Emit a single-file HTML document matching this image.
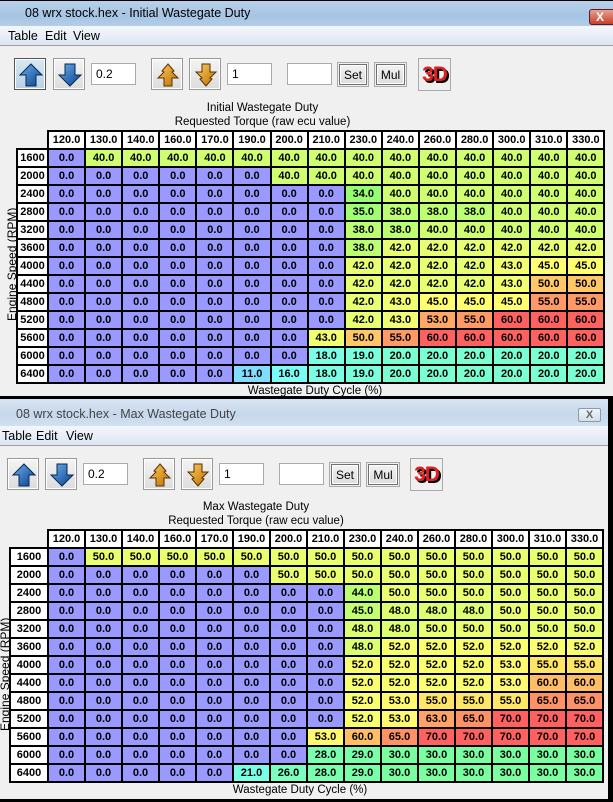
<!DOCTYPE html>
<html><head><meta charset="utf-8"><style>
*{box-sizing:border-box;margin:0;padding:0}
body{width:613px;height:802px;overflow:hidden;background:#000;font-family:"Liberation Sans",sans-serif;font-size:12px;color:#000;position:relative}
.win{position:absolute;left:0;background:#f0f0f0;overflow:hidden}
.tb{position:absolute;left:0;right:0;top:0;height:25px;background:linear-gradient(#b9d1ea,#a6c4e4 60%,#b4cde8)}
.tb span{position:absolute;top:5px;font-size:12.5px;color:#000}
.menu{position:absolute;left:0;right:0;height:20px;background:linear-gradient(#f4f7fc,#dde6f4);border-bottom:1px solid #a0a0a0}
.menu span{position:absolute;top:3px;font-size:12.5px}
.btn{position:absolute;width:32px;height:32px;border:1px solid #999;background:linear-gradient(#f4f4f4,#dcdcdc);box-shadow:inset 0 0 0 1px #fff}
.btn svg{position:absolute;left:3px;top:3px}
.inp{position:absolute;height:22px;background:#fff;border:1px solid #aaa;padding:3px 4px;font-size:12px}
.pb{position:absolute;height:21px;border:1px solid #707070;background:linear-gradient(#f2f2f2,#dcdcdc);box-shadow:inset 0 0 0 1px #fff;text-align:center;padding-top:3px;font-size:12px;outline:1px solid #aaa;outline-offset:1px}
.d3{position:absolute;width:33px;height:33px;border:1px solid #aaa;background:#f0f0f0;font-weight:bold;font-size:21px;color:#e02020;text-align:center;line-height:31px;letter-spacing:-1px;text-shadow:2px 2px 0 #000}
.cap{position:absolute;left:0;width:525px;text-align:center;font-size:11.5px}
table{position:absolute;border-collapse:collapse;table-layout:fixed}
td{border:2px solid #000;height:18px;text-align:center;font-weight:bold;font-size:11px;padding:0;line-height:14px}
td.h{background:#fff}
td.e{border:none;background:transparent}
.vl{position:absolute;transform:rotate(-90deg);transform-origin:0 0;font-size:12px;white-space:nowrap}
.a{background:#9999ff}
.t11{background:hsl(196,100%,75%)}.t16{background:hsl(176,100%,74%)}.t18{background:hsl(168,100%,74%)}.t19{background:hsl(164,100%,74%)}.t20{background:hsl(160,100%,74%)}
.t34{background:hsl(104,100%,72%)}.t35{background:hsl(100,100%,72%)}.t38{background:hsl(88,100%,72%)}.t40{background:hsl(80,100%,72%)}.t42{background:hsl(70,100%,72%)}.t43{background:hsl(66,100%,72%)}.t45{background:hsl(60,100%,72%)}.t50{background:hsl(38,100%,70%)}.t53{background:hsl(26,100%,70%)}.t55{background:hsl(20,100%,70%)}.t60{background:hsl(0,100%,69%)}
.b21{background:hsl(168,100%,74%)}.b26{background:hsl(151,100%,74%)}.b28{background:hsl(144,100%,74%)}.b29{background:hsl(141,100%,74%)}.b30{background:hsl(137,100%,74%)}
.b44{background:hsl(89,100%,72%)}.b45{background:hsl(86,100%,72%)}.b48{background:hsl(75,100%,72%)}.b50{background:hsl(69,100%,72%)}.b52{background:hsl(62,100%,72%)}.b53{background:hsl(58,100%,72%)}.b55{background:hsl(50,100%,70%)}.b60{background:hsl(34,100%,70%)}.b63{background:hsl(24,100%,70%)}.b65{background:hsl(17,100%,70%)}.b70{background:hsl(0,100%,69%)}
</style></head><body>
<svg width="0" height="0" style="position:absolute"><defs>
<linearGradient id="bl" x1="0" y1="0" x2="1" y2="1"><stop offset="0" stop-color="#6ab0f0"/><stop offset="1" stop-color="#0a3f8a"/></linearGradient>
<linearGradient id="or" x1="0" y1="0" x2="1" y2="1"><stop offset="0" stop-color="#ffd060"/><stop offset="1" stop-color="#b86a00"/></linearGradient>
</defs></svg>

<!-- Window 1 -->
<div class="win" style="top:0;width:613px;height:396px;border-top:1px solid #000">
<div class="tb"><span style="left:25px">08 wrx stock.hex - Initial Wastegate Duty</span>
<div style="position:absolute;left:589px;top:8px;width:26px;height:16px;border:1px solid #5a1d1d;border-radius:3px;background:linear-gradient(#e8a090,#c8402c);color:#fff;font-weight:bold;font-size:12px;line-height:14px;text-indent:6px">X</div></div>
<div class="menu" style="top:25px"><span style="left:8px">Table</span><span style="left:45px">Edit</span><span style="left:73px">View</span></div>
<div class="btn" style="left:14px;top:57px;border-color:#555;background:linear-gradient(#d8e8f4,#b8d0e4)"><svg width="26" height="26"><path d="M13 2 L24 13 L18 13 L18 24 L8 24 L8 13 L2 13 Z" fill="url(#bl)" stroke="#062850" stroke-width="1"/></svg></div>
<div class="btn" style="left:53px;top:57px"><svg width="26" height="26"><path d="M13 24 L24 13 L18 13 L18 2 L8 2 L8 13 L2 13 Z" fill="url(#bl)" stroke="#062850" stroke-width="1"/></svg></div>
<div class="inp" style="left:91px;top:62px;width:45px">0.2</div>
<div class="btn" style="left:151px;top:57px"><svg width="26" height="26"><path d="M13 2 L19 9 L17 10 L23 16 L17 16 L17 24 L9 24 L9 16 L3 16 L9 10 L7 9 Z" fill="url(#or)" stroke="#5a3000" stroke-width="1"/></svg></div>
<div class="btn" style="left:189px;top:57px"><svg width="26" height="26"><path d="M13 24 L19 17 L17 16 L23 10 L17 10 L17 2 L9 2 L9 10 L3 10 L9 16 L7 17 Z" fill="url(#or)" stroke="#5a3000" stroke-width="1"/></svg></div>
<div class="inp" style="left:227px;top:62px;width:45px">1</div>
<div class="inp" style="left:287px;top:62px;width:45px"></div>
<div class="pb" style="left:339px;top:63px;width:28px">Set</div>
<div class="pb" style="left:376px;top:63px;width:29px">Mul</div>
<div class="d3" style="left:418px;top:57px">3D</div>
<div class="cap" style="top:101px;left:0;width:525px">Initial Wastegate Duty</div>
<div class="cap" style="top:115px;left:0;width:525px">Requested Torque (raw ecu value)</div>
<div class="vl" style="left:5px;top:320px">Engine Speed (RPM)</div>
<table style="left:16px;top:129px;width:588px">
<colgroup><col style="width:31px"><col span="15" style="width:37.1px"></colgroup>
<tr><td class="e"></td><td class="h">120.0</td><td class="h">130.0</td><td class="h">140.0</td><td class="h">160.0</td><td class="h">170.0</td><td class="h">190.0</td><td class="h">200.0</td><td class="h">210.0</td><td class="h">230.0</td><td class="h">240.0</td><td class="h">260.0</td><td class="h">280.0</td><td class="h">300.0</td><td class="h">310.0</td><td class="h">330.0</td></tr>
<tr><td class="h">1600</td><td class="a">0.0</td><td class="t40">40.0</td><td class="t40">40.0</td><td class="t40">40.0</td><td class="t40">40.0</td><td class="t40">40.0</td><td class="t40">40.0</td><td class="t40">40.0</td><td class="t40">40.0</td><td class="t40">40.0</td><td class="t40">40.0</td><td class="t40">40.0</td><td class="t40">40.0</td><td class="t40">40.0</td><td class="t40">40.0</td></tr>
<tr><td class="h">2000</td><td class="a">0.0</td><td class="a">0.0</td><td class="a">0.0</td><td class="a">0.0</td><td class="a">0.0</td><td class="a">0.0</td><td class="t40">40.0</td><td class="t40">40.0</td><td class="t40">40.0</td><td class="t40">40.0</td><td class="t40">40.0</td><td class="t40">40.0</td><td class="t40">40.0</td><td class="t40">40.0</td><td class="t40">40.0</td></tr>
<tr><td class="h">2400</td><td class="a">0.0</td><td class="a">0.0</td><td class="a">0.0</td><td class="a">0.0</td><td class="a">0.0</td><td class="a">0.0</td><td class="a">0.0</td><td class="a">0.0</td><td class="t34">34.0</td><td class="t40">40.0</td><td class="t40">40.0</td><td class="t40">40.0</td><td class="t40">40.0</td><td class="t40">40.0</td><td class="t40">40.0</td></tr>
<tr><td class="h">2800</td><td class="a">0.0</td><td class="a">0.0</td><td class="a">0.0</td><td class="a">0.0</td><td class="a">0.0</td><td class="a">0.0</td><td class="a">0.0</td><td class="a">0.0</td><td class="t35">35.0</td><td class="t38">38.0</td><td class="t38">38.0</td><td class="t38">38.0</td><td class="t40">40.0</td><td class="t40">40.0</td><td class="t40">40.0</td></tr>
<tr><td class="h">3200</td><td class="a">0.0</td><td class="a">0.0</td><td class="a">0.0</td><td class="a">0.0</td><td class="a">0.0</td><td class="a">0.0</td><td class="a">0.0</td><td class="a">0.0</td><td class="t38">38.0</td><td class="t38">38.0</td><td class="t40">40.0</td><td class="t40">40.0</td><td class="t40">40.0</td><td class="t40">40.0</td><td class="t40">40.0</td></tr>
<tr><td class="h">3600</td><td class="a">0.0</td><td class="a">0.0</td><td class="a">0.0</td><td class="a">0.0</td><td class="a">0.0</td><td class="a">0.0</td><td class="a">0.0</td><td class="a">0.0</td><td class="t38">38.0</td><td class="t42">42.0</td><td class="t42">42.0</td><td class="t42">42.0</td><td class="t42">42.0</td><td class="t42">42.0</td><td class="t42">42.0</td></tr>
<tr><td class="h">4000</td><td class="a">0.0</td><td class="a">0.0</td><td class="a">0.0</td><td class="a">0.0</td><td class="a">0.0</td><td class="a">0.0</td><td class="a">0.0</td><td class="a">0.0</td><td class="t42">42.0</td><td class="t42">42.0</td><td class="t42">42.0</td><td class="t42">42.0</td><td class="t43">43.0</td><td class="t45">45.0</td><td class="t45">45.0</td></tr>
<tr><td class="h">4400</td><td class="a">0.0</td><td class="a">0.0</td><td class="a">0.0</td><td class="a">0.0</td><td class="a">0.0</td><td class="a">0.0</td><td class="a">0.0</td><td class="a">0.0</td><td class="t42">42.0</td><td class="t42">42.0</td><td class="t42">42.0</td><td class="t42">42.0</td><td class="t43">43.0</td><td class="t50">50.0</td><td class="t50">50.0</td></tr>
<tr><td class="h">4800</td><td class="a">0.0</td><td class="a">0.0</td><td class="a">0.0</td><td class="a">0.0</td><td class="a">0.0</td><td class="a">0.0</td><td class="a">0.0</td><td class="a">0.0</td><td class="t42">42.0</td><td class="t43">43.0</td><td class="t45">45.0</td><td class="t45">45.0</td><td class="t45">45.0</td><td class="t55">55.0</td><td class="t55">55.0</td></tr>
<tr><td class="h">5200</td><td class="a">0.0</td><td class="a">0.0</td><td class="a">0.0</td><td class="a">0.0</td><td class="a">0.0</td><td class="a">0.0</td><td class="a">0.0</td><td class="a">0.0</td><td class="t42">42.0</td><td class="t43">43.0</td><td class="t53">53.0</td><td class="t55">55.0</td><td class="t60">60.0</td><td class="t60">60.0</td><td class="t60">60.0</td></tr>
<tr><td class="h">5600</td><td class="a">0.0</td><td class="a">0.0</td><td class="a">0.0</td><td class="a">0.0</td><td class="a">0.0</td><td class="a">0.0</td><td class="a">0.0</td><td class="t43">43.0</td><td class="t50">50.0</td><td class="t55">55.0</td><td class="t60">60.0</td><td class="t60">60.0</td><td class="t60">60.0</td><td class="t60">60.0</td><td class="t60">60.0</td></tr>
<tr><td class="h">6000</td><td class="a">0.0</td><td class="a">0.0</td><td class="a">0.0</td><td class="a">0.0</td><td class="a">0.0</td><td class="a">0.0</td><td class="a">0.0</td><td class="t18">18.0</td><td class="t19">19.0</td><td class="t20">20.0</td><td class="t20">20.0</td><td class="t20">20.0</td><td class="t20">20.0</td><td class="t20">20.0</td><td class="t20">20.0</td></tr>
<tr><td class="h">6400</td><td class="a">0.0</td><td class="a">0.0</td><td class="a">0.0</td><td class="a">0.0</td><td class="a">0.0</td><td class="t11">11.0</td><td class="t16">16.0</td><td class="t18">18.0</td><td class="t19">19.0</td><td class="t20">20.0</td><td class="t20">20.0</td><td class="t20">20.0</td><td class="t20">20.0</td><td class="t20">20.0</td><td class="t20">20.0</td></tr>
</table>
<div class="cap" style="top:384px;left:0;width:630px">Wastegate Duty Cycle (%)</div>
</div>

<!-- Window 2 -->
<div class="win" style="top:399px;width:608px;height:400px">
<div class="tb" style="background:linear-gradient(#d7e4f2,#c6d8ec 60%,#d2e1f1);height:27px"><span style="left:16px;top:8px;color:#444">08 wrx stock.hex - Max Wastegate Duty</span>
<div style="position:absolute;left:578px;top:9px;width:23px;height:14px;border:1px solid #8a9ab0;border-radius:2px;background:linear-gradient(#eef3f8,#d4dee9);color:#666;font-weight:bold;font-size:11px;line-height:12px;text-align:center">X</div></div>
<div class="menu" style="top:27px"><span style="left:2px">Table</span><span style="left:36px">Edit</span><span style="left:66px">View</span></div>
<div class="btn" style="left:7px;top:59px"><svg width="26" height="26"><path d="M13 2 L24 13 L18 13 L18 24 L8 24 L8 13 L2 13 Z" fill="url(#bl)" stroke="#062850" stroke-width="1"/></svg></div>
<div class="btn" style="left:45px;top:59px"><svg width="26" height="26"><path d="M13 24 L24 13 L18 13 L18 2 L8 2 L8 13 L2 13 Z" fill="url(#bl)" stroke="#062850" stroke-width="1"/></svg></div>
<div class="inp" style="left:83px;top:64px;width:45px">0.2</div>
<div class="btn" style="left:143px;top:59px"><svg width="26" height="26"><path d="M13 2 L19 9 L17 10 L23 16 L17 16 L17 24 L9 24 L9 16 L3 16 L9 10 L7 9 Z" fill="url(#or)" stroke="#5a3000" stroke-width="1"/></svg></div>
<div class="btn" style="left:181px;top:59px"><svg width="26" height="26"><path d="M13 24 L19 17 L17 16 L23 10 L17 10 L17 2 L9 2 L9 10 L3 10 L9 16 L7 17 Z" fill="url(#or)" stroke="#5a3000" stroke-width="1"/></svg></div>
<div class="inp" style="left:219px;top:64px;width:45px">1</div>
<div class="inp" style="left:279px;top:64px;width:45px"></div>
<div class="pb" style="left:331px;top:65px;width:28px">Set</div>
<div class="pb" style="left:368px;top:65px;width:30px">Mul</div>
<div class="d3" style="left:410px;top:59px">3D</div>
<div class="cap" style="top:102px;left:0;width:512px">Max Wastegate Duty</div>
<div class="cap" style="top:116px;left:0;width:512px">Requested Torque (raw ecu value)</div>
<div class="vl" style="left:-2px;top:332px">Engine Speed (RPM)</div>
<table style="left:9px;top:130px;width:594px">
<colgroup><col style="width:38px"><col span="15" style="width:37px"></colgroup>
<tr><td class="e"></td><td class="h">120.0</td><td class="h">130.0</td><td class="h">140.0</td><td class="h">160.0</td><td class="h">170.0</td><td class="h">190.0</td><td class="h">200.0</td><td class="h">210.0</td><td class="h">230.0</td><td class="h">240.0</td><td class="h">260.0</td><td class="h">280.0</td><td class="h">300.0</td><td class="h">310.0</td><td class="h">330.0</td></tr>
<tr><td class="h">1600</td><td class="a">0.0</td><td class="b50">50.0</td><td class="b50">50.0</td><td class="b50">50.0</td><td class="b50">50.0</td><td class="b50">50.0</td><td class="b50">50.0</td><td class="b50">50.0</td><td class="b50">50.0</td><td class="b50">50.0</td><td class="b50">50.0</td><td class="b50">50.0</td><td class="b50">50.0</td><td class="b50">50.0</td><td class="b50">50.0</td></tr>
<tr><td class="h">2000</td><td class="a">0.0</td><td class="a">0.0</td><td class="a">0.0</td><td class="a">0.0</td><td class="a">0.0</td><td class="a">0.0</td><td class="b50">50.0</td><td class="b50">50.0</td><td class="b50">50.0</td><td class="b50">50.0</td><td class="b50">50.0</td><td class="b50">50.0</td><td class="b50">50.0</td><td class="b50">50.0</td><td class="b50">50.0</td></tr>
<tr><td class="h">2400</td><td class="a">0.0</td><td class="a">0.0</td><td class="a">0.0</td><td class="a">0.0</td><td class="a">0.0</td><td class="a">0.0</td><td class="a">0.0</td><td class="a">0.0</td><td class="b44">44.0</td><td class="b50">50.0</td><td class="b50">50.0</td><td class="b50">50.0</td><td class="b50">50.0</td><td class="b50">50.0</td><td class="b50">50.0</td></tr>
<tr><td class="h">2800</td><td class="a">0.0</td><td class="a">0.0</td><td class="a">0.0</td><td class="a">0.0</td><td class="a">0.0</td><td class="a">0.0</td><td class="a">0.0</td><td class="a">0.0</td><td class="b45">45.0</td><td class="b48">48.0</td><td class="b48">48.0</td><td class="b48">48.0</td><td class="b50">50.0</td><td class="b50">50.0</td><td class="b50">50.0</td></tr>
<tr><td class="h">3200</td><td class="a">0.0</td><td class="a">0.0</td><td class="a">0.0</td><td class="a">0.0</td><td class="a">0.0</td><td class="a">0.0</td><td class="a">0.0</td><td class="a">0.0</td><td class="b48">48.0</td><td class="b48">48.0</td><td class="b50">50.0</td><td class="b50">50.0</td><td class="b50">50.0</td><td class="b50">50.0</td><td class="b50">50.0</td></tr>
<tr><td class="h">3600</td><td class="a">0.0</td><td class="a">0.0</td><td class="a">0.0</td><td class="a">0.0</td><td class="a">0.0</td><td class="a">0.0</td><td class="a">0.0</td><td class="a">0.0</td><td class="b48">48.0</td><td class="b52">52.0</td><td class="b52">52.0</td><td class="b52">52.0</td><td class="b52">52.0</td><td class="b52">52.0</td><td class="b52">52.0</td></tr>
<tr><td class="h">4000</td><td class="a">0.0</td><td class="a">0.0</td><td class="a">0.0</td><td class="a">0.0</td><td class="a">0.0</td><td class="a">0.0</td><td class="a">0.0</td><td class="a">0.0</td><td class="b52">52.0</td><td class="b52">52.0</td><td class="b52">52.0</td><td class="b52">52.0</td><td class="b53">53.0</td><td class="b55">55.0</td><td class="b55">55.0</td></tr>
<tr><td class="h">4400</td><td class="a">0.0</td><td class="a">0.0</td><td class="a">0.0</td><td class="a">0.0</td><td class="a">0.0</td><td class="a">0.0</td><td class="a">0.0</td><td class="a">0.0</td><td class="b52">52.0</td><td class="b52">52.0</td><td class="b52">52.0</td><td class="b52">52.0</td><td class="b53">53.0</td><td class="b60">60.0</td><td class="b60">60.0</td></tr>
<tr><td class="h">4800</td><td class="a">0.0</td><td class="a">0.0</td><td class="a">0.0</td><td class="a">0.0</td><td class="a">0.0</td><td class="a">0.0</td><td class="a">0.0</td><td class="a">0.0</td><td class="b52">52.0</td><td class="b53">53.0</td><td class="b55">55.0</td><td class="b55">55.0</td><td class="b55">55.0</td><td class="b65">65.0</td><td class="b65">65.0</td></tr>
<tr><td class="h">5200</td><td class="a">0.0</td><td class="a">0.0</td><td class="a">0.0</td><td class="a">0.0</td><td class="a">0.0</td><td class="a">0.0</td><td class="a">0.0</td><td class="a">0.0</td><td class="b52">52.0</td><td class="b53">53.0</td><td class="b63">63.0</td><td class="b65">65.0</td><td class="b70">70.0</td><td class="b70">70.0</td><td class="b70">70.0</td></tr>
<tr><td class="h">5600</td><td class="a">0.0</td><td class="a">0.0</td><td class="a">0.0</td><td class="a">0.0</td><td class="a">0.0</td><td class="a">0.0</td><td class="a">0.0</td><td class="b53">53.0</td><td class="b60">60.0</td><td class="b65">65.0</td><td class="b70">70.0</td><td class="b70">70.0</td><td class="b70">70.0</td><td class="b70">70.0</td><td class="b70">70.0</td></tr>
<tr><td class="h">6000</td><td class="a">0.0</td><td class="a">0.0</td><td class="a">0.0</td><td class="a">0.0</td><td class="a">0.0</td><td class="a">0.0</td><td class="a">0.0</td><td class="b28">28.0</td><td class="b29">29.0</td><td class="b30">30.0</td><td class="b30">30.0</td><td class="b30">30.0</td><td class="b30">30.0</td><td class="b30">30.0</td><td class="b30">30.0</td></tr>
<tr><td class="h">6400</td><td class="a">0.0</td><td class="a">0.0</td><td class="a">0.0</td><td class="a">0.0</td><td class="a">0.0</td><td class="b21">21.0</td><td class="b26">26.0</td><td class="b28">28.0</td><td class="b29">29.0</td><td class="b30">30.0</td><td class="b30">30.0</td><td class="b30">30.0</td><td class="b30">30.0</td><td class="b30">30.0</td><td class="b30">30.0</td></tr>
</table>
<div class="cap" style="top:385px;left:0;width:600px">Wastegate Duty Cycle (%)</div>
</div>
</body></html>
